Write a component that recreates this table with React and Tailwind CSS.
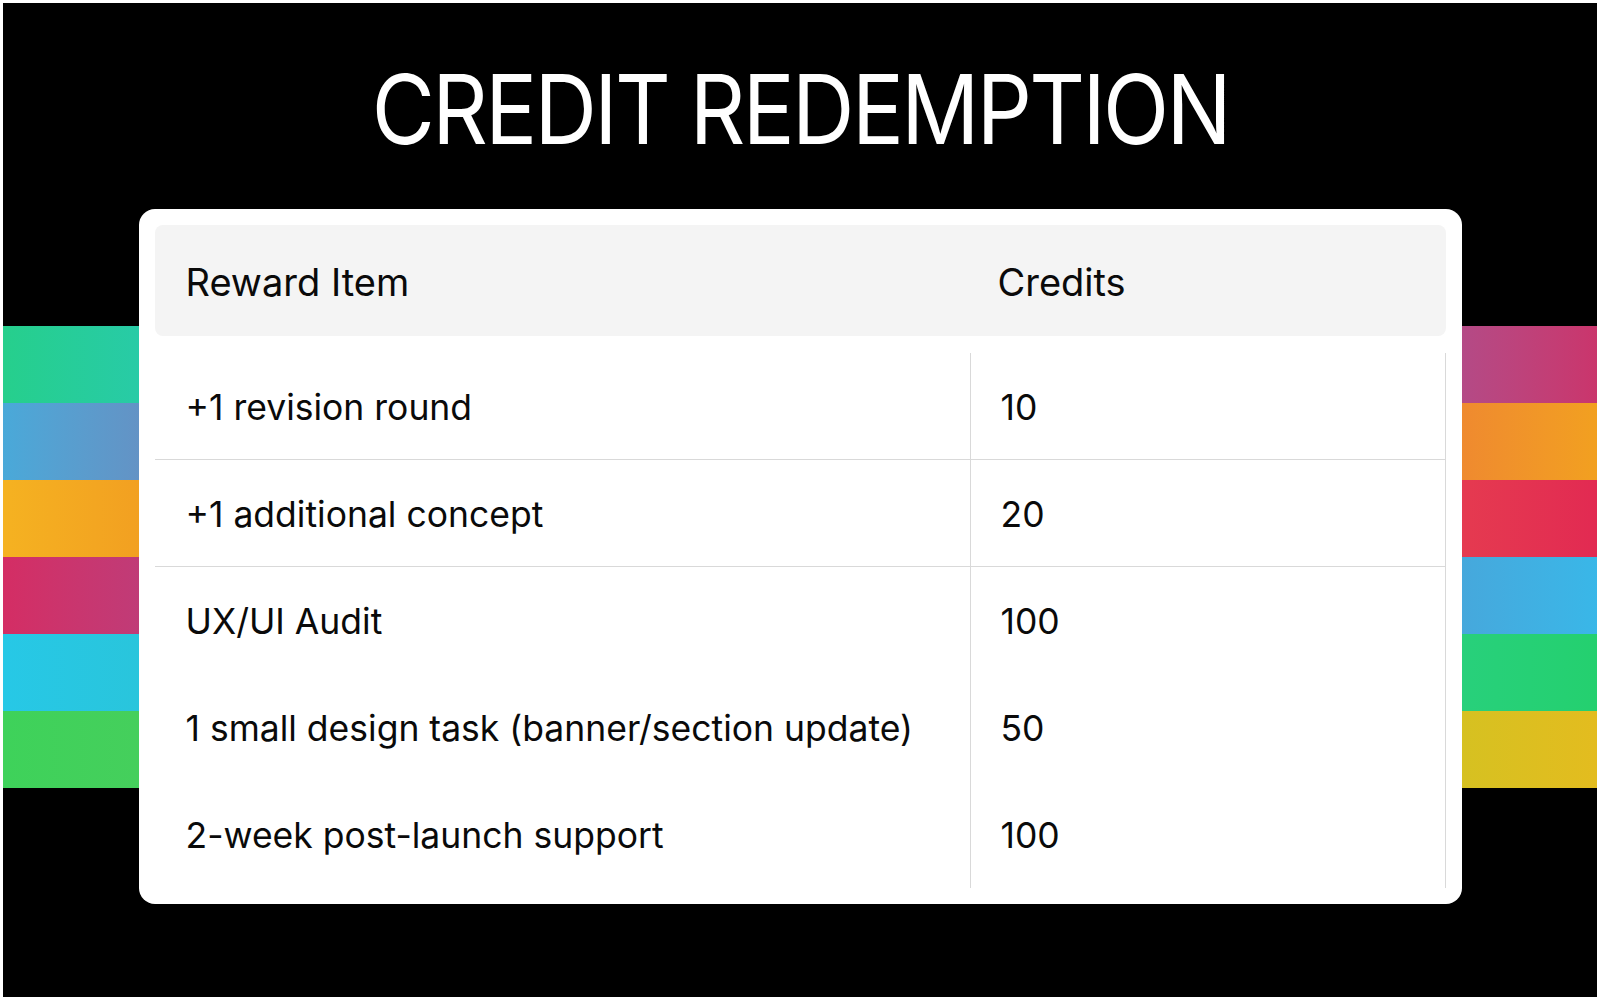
import React from 'react';

const leftStripes = [
  'bg-linear-to-r from-[#26cf8c] to-[#28cba6]',
  'bg-linear-to-r from-[#49a9d9] to-[#6393c5]',
  'bg-linear-to-r from-[#f5b221] to-[#f2a021]',
  'bg-linear-to-r from-[#d42d64] to-[#c03b77]',
  'bg-linear-to-r from-[#27c8e6] to-[#29c5dc]',
  'bg-linear-to-r from-[#3ed25a] to-[#45cf5c]',
];

const rightStripes = [
  'bg-linear-to-r from-[#b44a86] to-[#ca356c]',
  'bg-linear-to-r from-[#ef8a2f] to-[#f2a020]',
  'bg-linear-to-r from-[#e53a50] to-[#e22a52]',
  'bg-linear-to-r from-[#46a8dc] to-[#39b7e8]',
  'bg-linear-to-r from-[#28d07b] to-[#24d06f]',
  'bg-linear-to-r from-[#d6c121] to-[#e3bc1f]',
];

const rewards = [
  { item: '+1 revision round', credits: '10', line: true },
  { item: '+1 additional concept', credits: '20', line: true },
  { item: 'UX/UI Audit', credits: '100' },
  { item: '1 small design task (banner/section update)', credits: '50' },
  { item: '2-week post-launch support', credits: '100' },
];

function Stripes({ colors }) {
  return (
    <div className="flex-1 flex flex-col">
      {colors.map((c, i) => (
        <div key={i} className={`h-[77px] ${c}`}></div>
      ))}
    </div>
  );
}

export default function App() {
  return (
    <div className="w-[1600px] h-[1000px] bg-white p-[3px] font-['Inter',sans-serif] text-[#0a0a0a]">
      <div className="h-full bg-black flex flex-col">
        <div className="pt-[58px] text-center">
          <h1 className="inline-block scale-x-[0.9] text-white text-[96px] leading-none tracking-[-0.03em] font-normal">
            CREDIT REDEMPTION
          </h1>
        </div>

        <div className="mt-[52px] flex items-center">
          <Stripes colors={leftStripes} />

          <div className="w-[1323px] bg-white rounded-[16px] p-4">
            <div className="h-[111px] bg-[#f4f4f4] rounded-lg grid grid-cols-[815px_1fr] items-center text-[38px]">
              <div className="pl-[31px] pt-[3px]">Reward Item</div>
              <div className="pl-[28px] pt-[3px]">Credits</div>
            </div>

            <div className="mt-[17px]">
              {rewards.map((r, i) => (
                <div
                  key={i}
                  className={`grid grid-cols-[815px_1fr] h-[107px] text-[35.5px] ${r.line ? 'border-b border-[#d9d9d9]' : ''}`}
                >
                  <div className="pl-[31px] pt-[3px] flex items-center">{r.item}</div>
                  <div className="pl-[30px] pt-[3px] flex items-center border-l border-r border-[#d9d9d9]">
                    {r.credits}
                  </div>
                </div>
              ))}
            </div>
          </div>

          <Stripes colors={rightStripes} />
        </div>
      </div>
    </div>
  );
}
